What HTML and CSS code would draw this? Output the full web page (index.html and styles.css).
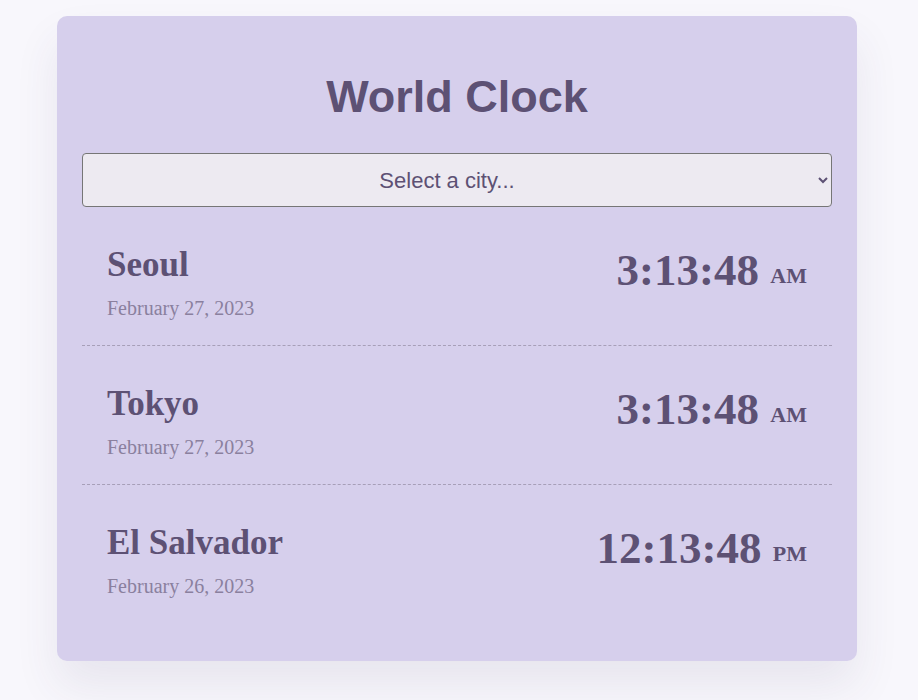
FILE: index.html
```html
<!DOCTYPE html>
<html lang="en">
<head>
<meta charset="utf-8">
<title>World Clock</title>
<link rel="stylesheet" href="styles.css">
</head>
<body>
<div class="card">
  <h1 class="title">World Clock</h1>
  <select class="city-select">
    <option>Select a city...</option>
    <option>Seoul</option>
    <option>Tokyo</option>
    <option>El Salvador</option>
  </select>
  <div class="cities">
    <div class="city">
      <div class="info">
        <h2 class="name">Seoul</h2>
        <div class="date">February 27, 2023</div>
      </div>
      <div class="time">3:13:48 <small>AM</small></div>
    </div>
    <div class="city">
      <div class="info">
        <h2 class="name">Tokyo</h2>
        <div class="date">February 27, 2023</div>
      </div>
      <div class="time">3:13:48 <small>AM</small></div>
    </div>
    <div class="city last">
      <div class="info">
        <h2 class="name">El Salvador</h2>
        <div class="date">February 26, 2023</div>
      </div>
      <div class="time">12:13:48 <small>PM</small></div>
    </div>
  </div>
</div>
</body>
</html>
```

FILE: styles.css
```css
html, body {
  margin: 0;
  padding: 0;
  background: #f8f7fc;
}

body {
  font-family: "Liberation Serif", "Times New Roman", serif;
  color: #5d5174;
  padding-top: 16px;
  padding-bottom: 40px;
}

.card {
  width: 750px;
  margin-left: 57px;
  background: #d6cfec;
  border-radius: 10px;
  padding: 25px 25px 38px 25px;
  box-shadow: 0 25px 45px rgba(70, 60, 100, 0.09);
}

.title {
  font-family: "Liberation Sans", Arial, sans-serif;
  font-weight: bold;
  font-size: 45px;
  text-align: center;
  margin: 30px 0 30px 0;
  color: #5d5174;
}

.city-select {
  display: block;
  width: 750px;
  height: 54px;
  box-sizing: border-box;
  font-family: "Liberation Sans", Arial, sans-serif;
  font-size: 22px;
  color: #5d5174;
  background-color: #edeaf1;
  border: 1px solid #767676;
  border-radius: 4px;
  text-align: center;
  text-align-last: center;
  padding: 0 12px 0 4px;
}

.city {
  display: flex;
  justify-content: space-between;
  align-items: flex-start;
  padding: 38px 25px 25px 25px;
  border-bottom: 1px dashed #a79fb8;
}

.city.last {
  border-bottom: none;
}

.name {
  margin: 0;
  font-size: 35px;
  font-weight: bold;
  color: #5d5174;
}

.date {
  margin-top: 12px;
  font-size: 20px;
  color: #8a809e;
}

.time {
  font-size: 45px;
  font-weight: bold;
  color: #5d5174;
  margin-top: -1px;
}

.time small {
  font-size: 22px;
  vertical-align: 2px;
}
```
